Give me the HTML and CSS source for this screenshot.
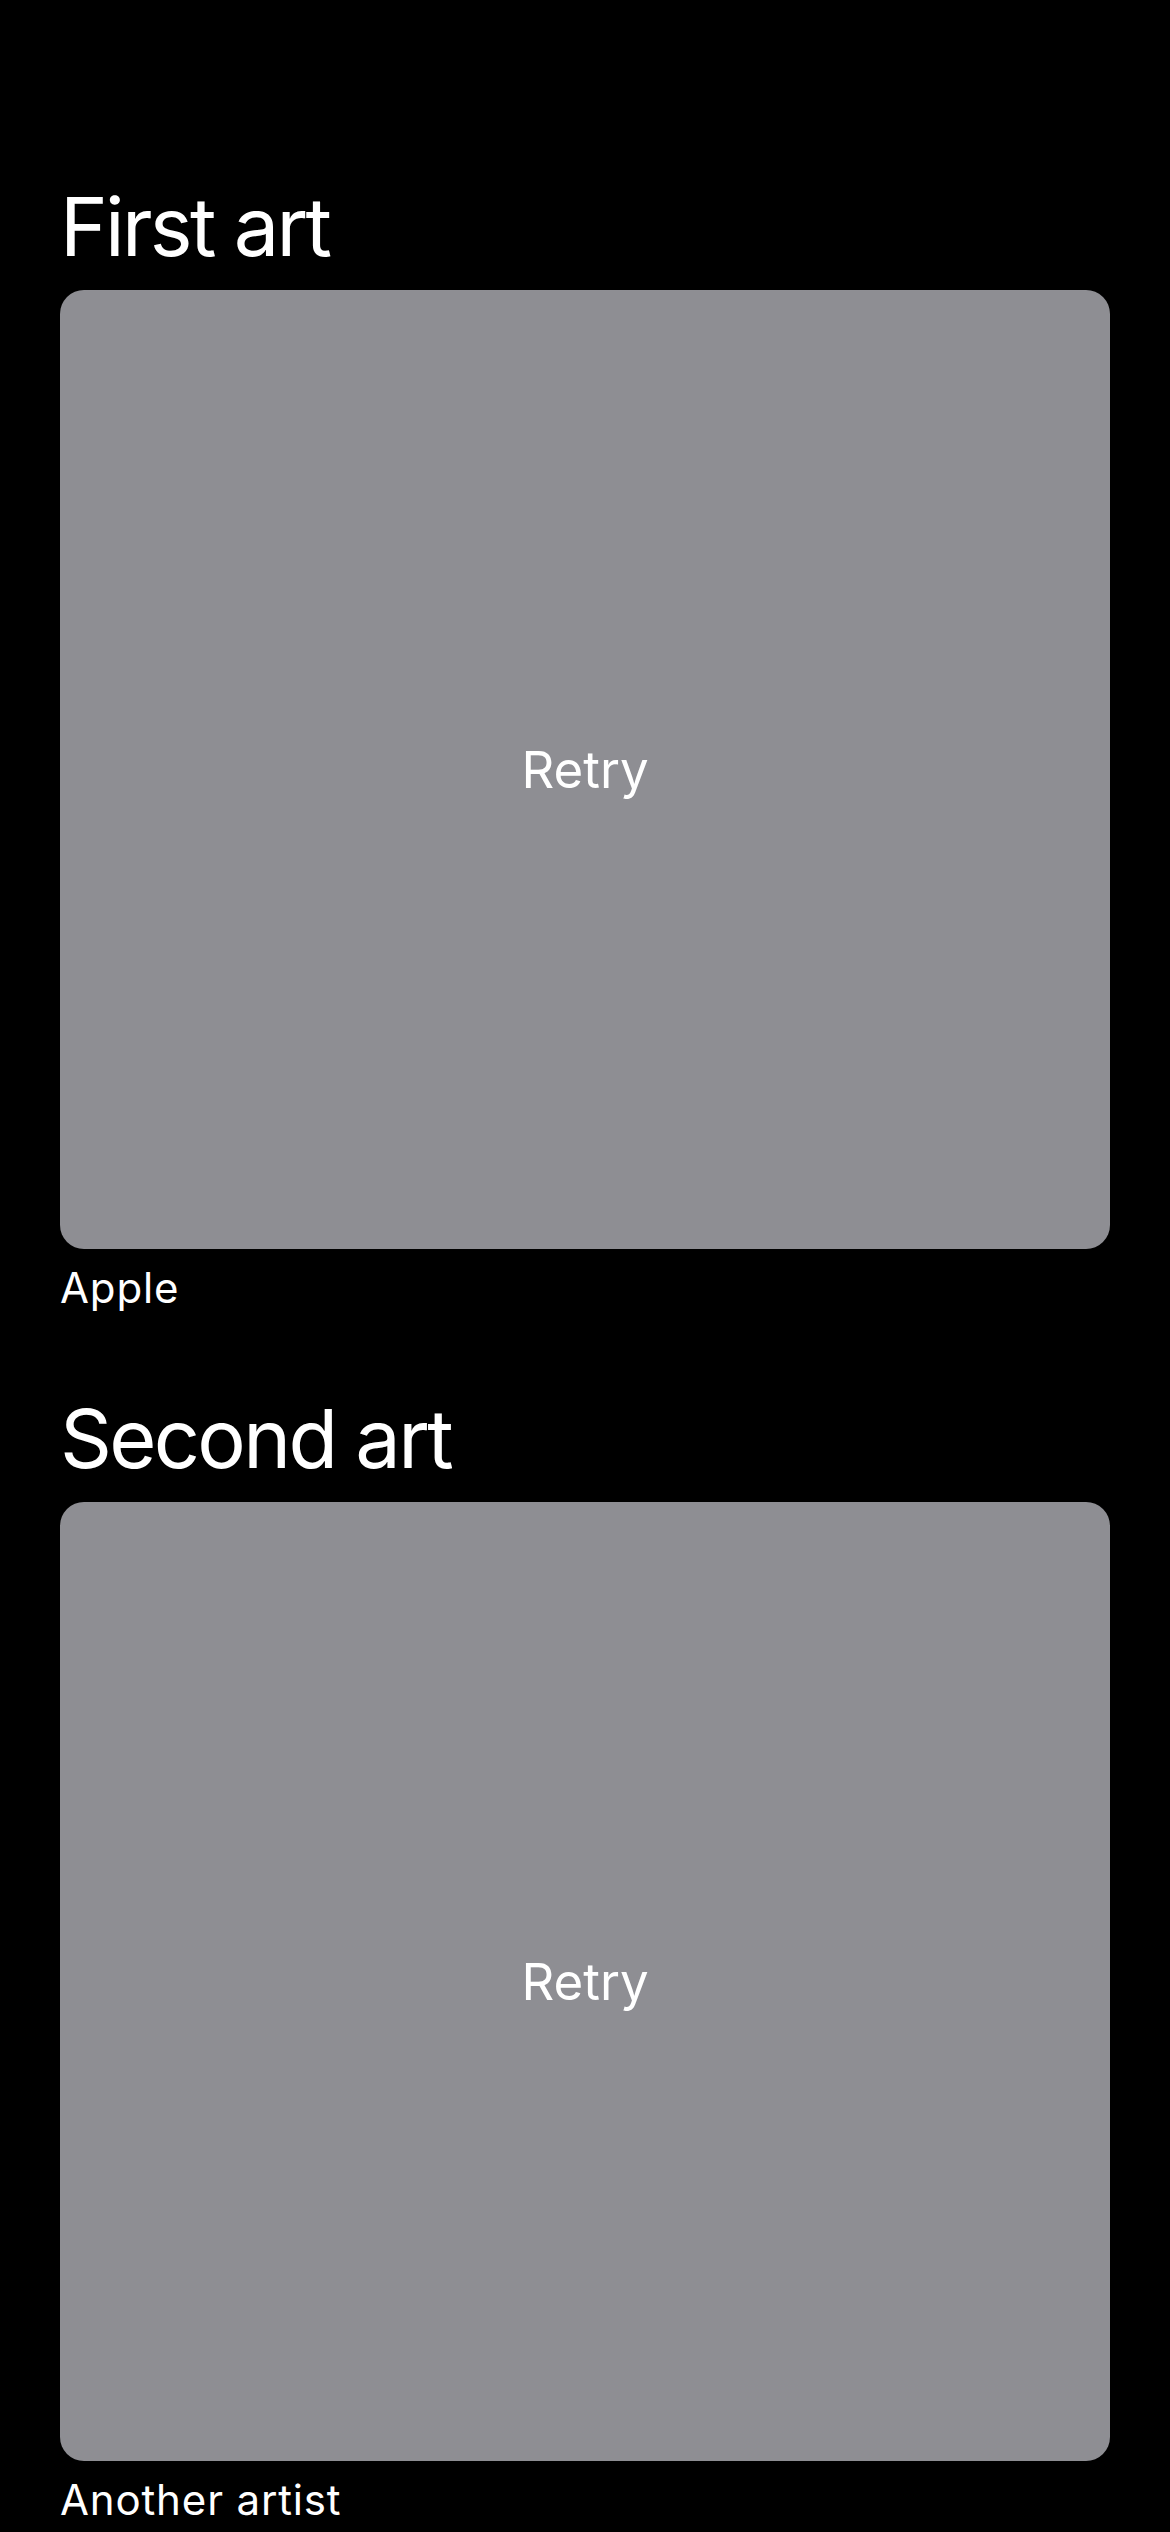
FILE: index.html
```html
<!DOCTYPE html>
<html lang="en">
<head>
<meta charset="utf-8">
<title>Art list</title>
<link rel="stylesheet" href="styles.css">
</head>
<body>
<main class="list">
  <section class="art">
    <h1 class="art-title">First art</h1>
    <div class="art-card"><span class="retry">Retry</span></div>
    <p class="art-artist">Apple</p>
  </section>
  <section class="art">
    <h1 class="art-title">Second art</h1>
    <div class="art-card"><span class="retry">Retry</span></div>
    <p class="art-artist">Another artist</p>
  </section>
</main>
</body>
</html>
```
FILE: styles.css
```css
html, body {
  margin: 0;
  padding: 0;
  background: #000;
}
body {
  font-family: Inter, "Noto Sans", "Liberation Sans", sans-serif;
  color: #fff;
  width: 1170px;
  height: 2532px;
  overflow: hidden;
}
.list {
  display: flex;
  flex-direction: column;
  gap: 76px;
  padding: 177px 60px 0 60px;
}
.art {
  display: flex;
  flex-direction: column;
}
.art-title {
  margin: 0;
  font-size: 81px;
  line-height: 100px;
  font-weight: 400;
  letter-spacing: -2.7px;
}
.art-card {
  margin-top: 13px;
  height: 959px;
  border-radius: 24px;
  background: #8e8e93;
  display: flex;
  align-items: center;
  justify-content: center;
}
.retry {
  font-size: 51px;
  line-height: 60px;
  color: #fff;
}
.art-artist {
  margin: 14px 0 0 0;
  font-size: 42px;
  line-height: 50px;
  letter-spacing: 0.85px;
}
```
